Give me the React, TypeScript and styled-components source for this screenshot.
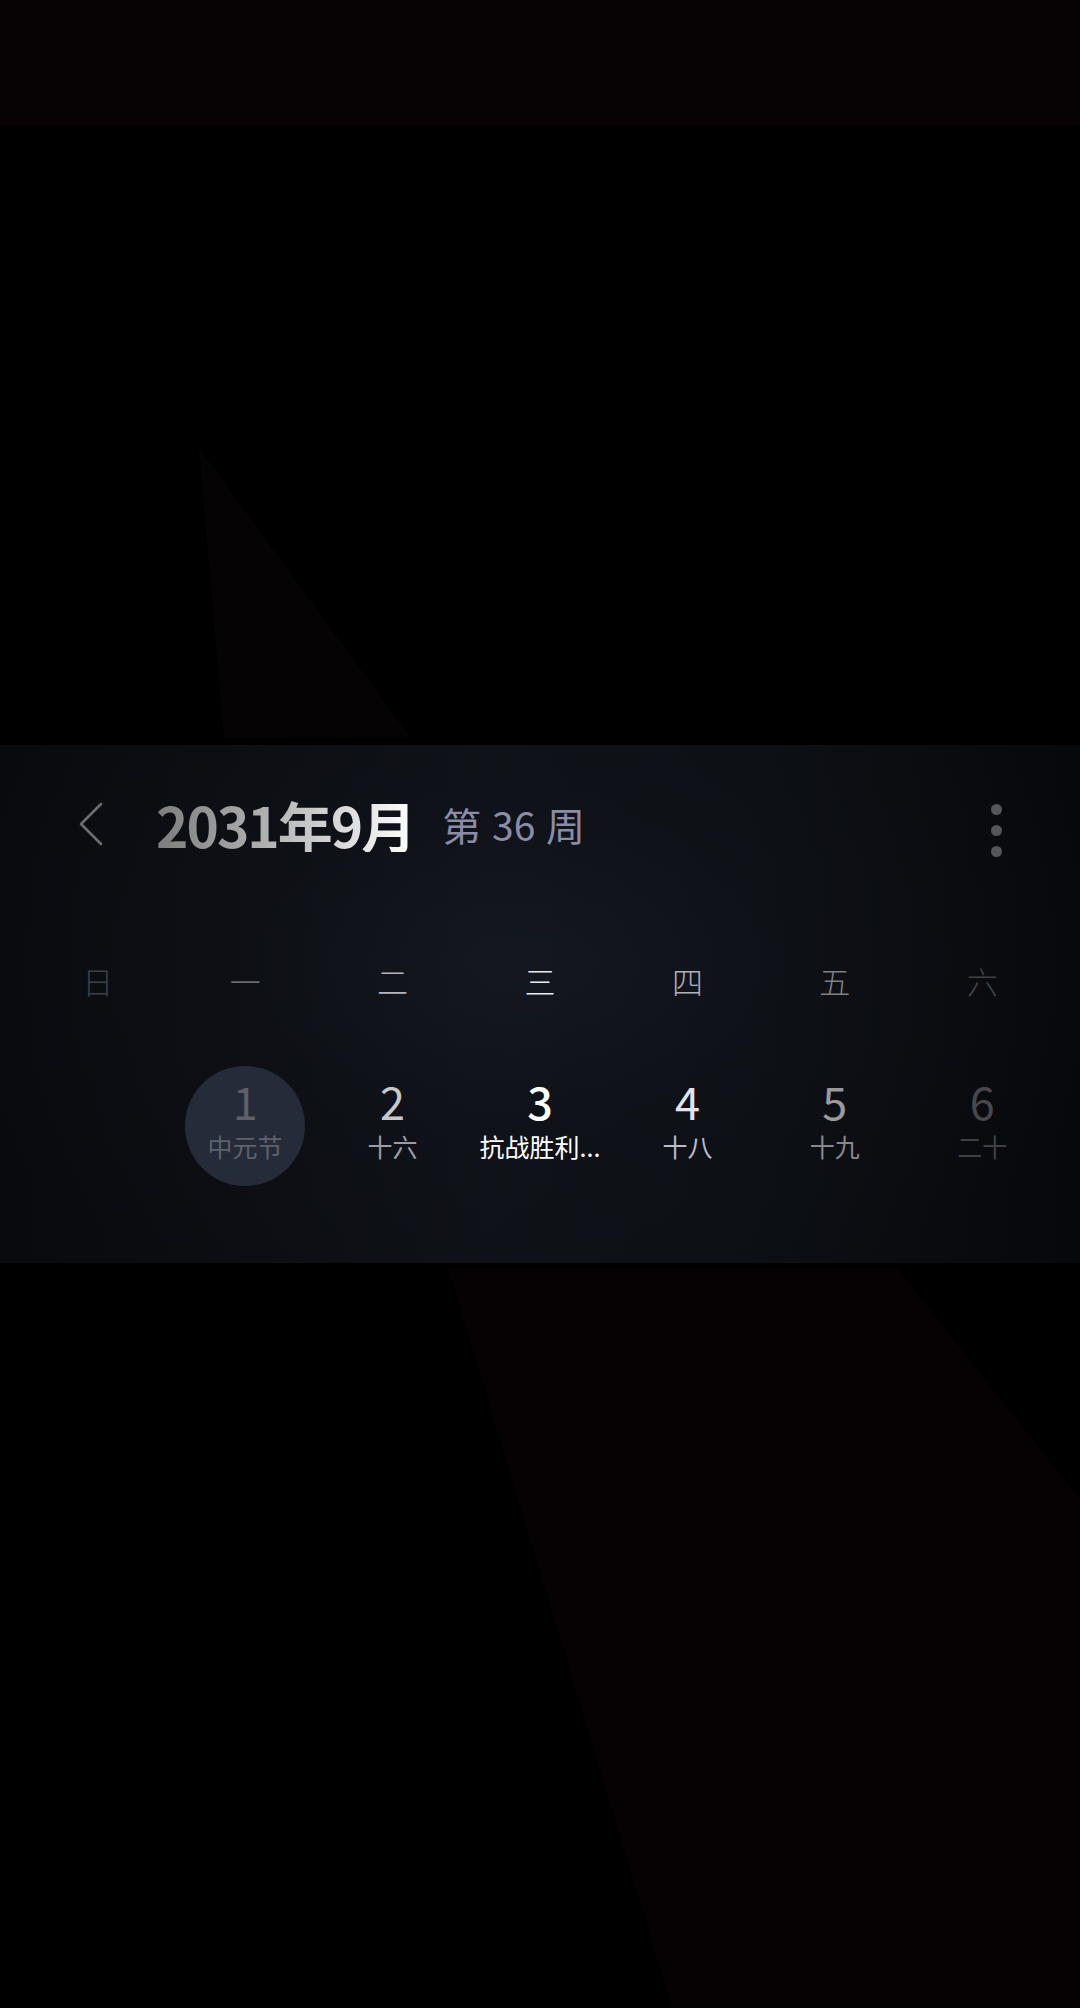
import React from "react";
import styled, { createGlobalStyle } from "styled-components";

const GlobalStyle = createGlobalStyle`
  html, body {
    margin: 0;
    padding: 0;
    background: #000;
  }
  body {
    font-family: "Noto Sans CJK SC", "Noto Sans", sans-serif;
  }
`;

const Page = styled.div`
  position: relative;
  overflow: hidden;

  display: flex;
  flex-direction: column;

  width: 1080px;
  height: 2008px;

  background: #000;
`;

const Backdrop = styled.svg`
  position: absolute;
  top: 0;
  left: 0;

  width: 1080px;
  height: 2008px;
`;

const TopBand = styled.div`
  position: relative;

  height: 125px;

  background: #070304;
`;

const Gap = styled.div`
  height: 620px;
`;

const Panel = styled.section`
  position: relative;

  display: flex;
  flex-direction: column;

  height: 518px;

  background:
    radial-gradient(ellipse 620px 360px at 48% 42%, rgba(26, 30, 40, 0.5) 0%, rgba(18, 21, 29, 0.3) 45%, rgba(0, 0, 0, 0) 100%),
    linear-gradient(90deg, #090a0e 0%, #0e1117 45%, #0c0f14 70%, #07080b 100%);
`;

const Header = styled.header`
  display: flex;
  align-items: center;

  height: 158px;
  padding: 0 78px 0 79px;
`;

const Back = styled.svg`
  flex: none;

  width: 24px;
  height: 44px;
`;

const Title = styled.h1`
  margin: 0 0 0 53px;

  font-size: 55px;
  font-weight: 700;
  letter-spacing: -2px;
  line-height: 1;

  background: linear-gradient(90deg, #7c7c7c 0%, #b4b4b4 45%, #ffffff 100%);
  -webkit-background-clip: text;
  background-clip: text;
  color: transparent;
`;

const Week = styled.span`
  margin-left: 28px;

  font-size: 39px;
  font-weight: 400;
  line-height: 1;
  word-spacing: 2px;

  color: #8c8ca6;
`;

const Menu = styled.div`
  display: flex;
  flex-direction: column;
  gap: 10px;

  margin: 12px 0 0 auto;
`;

const Dot = styled.span`
  width: 11px;
  height: 11px;

  border-radius: 50%;
  background: #555659;
`;

const Grid = styled.div`
  display: grid;
  grid-template-columns: repeat(7, 1fr);

  padding: 0 24px;
`;

const WeekdayRow = styled(Grid)`
  align-items: center;

  height: 154px;
`;

const Weekday = styled.span<{ $color: string }>`
  text-align: center;

  font-size: 31px;
  font-weight: 300;

  color: ${(p) => p.$color};
`;

const DateRow = styled(Grid)`
  margin-top: 9px;
`;

const DayCell = styled.div<{ $selected?: boolean }>`
  box-sizing: border-box;

  display: flex;
  flex-direction: column;
  align-items: center;
  justify-content: center;
  gap: 6px;

  width: 120px;
  height: 120px;
  margin: 0 auto;
  padding-bottom: 14px;

  border-radius: 50%;
  background: ${(p) => (p.$selected ? "rgba(42, 48, 64, 0.85)" : "transparent")};
`;

const DayNumber = styled.span<{ $color: string; $strong?: boolean }>`
  font-size: 45px;
  font-weight: ${(p) => (p.$strong ? 500 : 400)};
  line-height: 48px;

  color: ${(p) => p.$color};
`;

const Lunar = styled.span<{ $color: string }>`
  font-size: 25px;
  font-weight: 400;
  line-height: 30px;
  white-space: nowrap;

  color: ${(p) => p.$color};
`;

const weekdays = [
  { label: "日", color: "#3c4048" },
  { label: "一", color: "#6a6b70" },
  { label: "二", color: "#b4b4ba" },
  { label: "三", color: "#e8e8ee" },
  { label: "四", color: "#b0b0ba" },
  { label: "五", color: "#808086" },
  { label: "六", color: "#404246" },
];

type Day = {
  day: number;
  lunar: string;
  color: string;
  lunarColor: string;
  selected?: boolean;
  today?: boolean;
};

const days: Day[] = [
  { day: 1, lunar: "中元节", color: "#5e6168", lunarColor: "#5e626a", selected: true },
  { day: 2, lunar: "十六", color: "#c8c8cc", lunarColor: "#9c9ca4" },
  { day: 3, lunar: "抗战胜利...", color: "#ffffff", lunarColor: "#ffffff", today: true },
  { day: 4, lunar: "十八", color: "#e4e4ee", lunarColor: "#bcbccc" },
  { day: 5, lunar: "十九", color: "#9a9a9e", lunarColor: "#88888e" },
  { day: 6, lunar: "二十", color: "#48484c", lunarColor: "#404044" },
];

export default function App() {
  return (
    <>
      <GlobalStyle />
      <Page>
        <Backdrop viewBox="0 0 1080 2008">
          <polygon points="199,448 410,737 224,737" fill="#060304" />
          <polygon points="448,1268 897,1268 1080,1499 1080,2008 672,2008" fill="#060203" />
        </Backdrop>
        <TopBand />
        <Gap />
        <Panel>
          <Header>
            <Back viewBox="0 0 24 44">
              <polyline
                points="22,2 2,22 22,42"
                fill="none"
                stroke="#6c6c70"
                strokeWidth="2.6"
                strokeLinecap="round"
                strokeLinejoin="round"
              />
            </Back>
            <Title>2031年9月</Title>
            <Week>第 36 周</Week>
            <Menu>
              <Dot />
              <Dot />
              <Dot />
            </Menu>
          </Header>
          <WeekdayRow>
            {weekdays.map((w) => (
              <Weekday key={w.label} $color={w.color}>
                {w.label}
              </Weekday>
            ))}
          </WeekdayRow>
          <DateRow>
            <div />
            {days.map((d) => (
              <DayCell key={d.day} $selected={d.selected}>
                <DayNumber $color={d.color} $strong={d.today}>
                  {d.day}
                </DayNumber>
                <Lunar $color={d.lunarColor}>{d.lunar}</Lunar>
              </DayCell>
            ))}
          </DateRow>
        </Panel>
      </Page>
    </>
  );
}
